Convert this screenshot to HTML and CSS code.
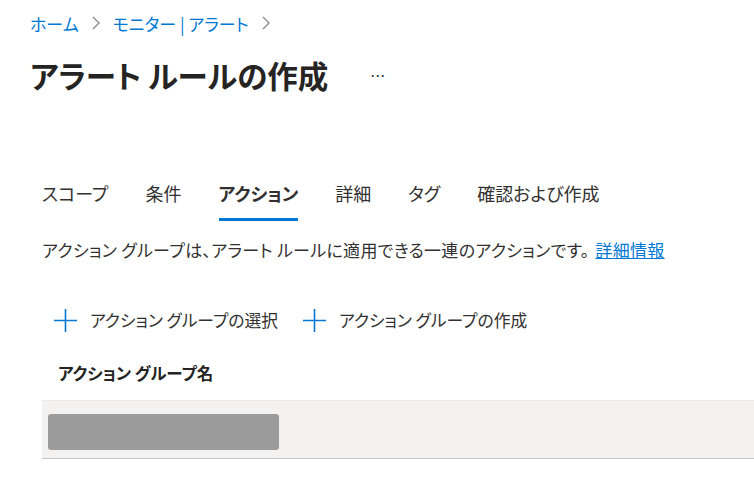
FILE: index.html
```html
<!DOCTYPE html>
<html lang="ja">
<head>
  <meta charset="UTF-8">
  <meta name="viewport" content="width=device-width, initial-scale=1.0">
  <title>アラート ルールの作成</title>
  <link rel="stylesheet" href="styles.css">
</head>
<body>
  <nav class="breadcrumb">
    <a href="#">ホーム</a>
    <svg class="chevron" width="8" height="14" viewBox="0 0 8 14"><path d="M1 1l6 6-6 6" stroke="#8a8886" stroke-width="1.3" fill="none"/></svg>
    <a href="#">モニター | アラート</a>
    <svg class="chevron" width="8" height="14" viewBox="0 0 8 14"><path d="M1 1l6 6-6 6" stroke="#8a8886" stroke-width="1.3" fill="none"/></svg>
  </nav>

  <div class="page-title">
    <h1>アラート ルールの作成</h1>
    <span class="more">…</span>
  </div>

  <div class="content">
    <ul class="tabs">
      <li>スコープ</li>
      <li>条件</li>
      <li class="active">アクション</li>
      <li>詳細</li>
      <li>タグ</li>
      <li>確認および作成</li>
    </ul>

    <p class="desc">アクション グループは、アラート ルールに適用できる一連のアクションです。<a href="#">詳細情報</a></p>

    <div class="commands">
      <button class="cmd">
        <svg width="23" height="23" viewBox="0 0 23 23"><path d="M11.5 0v23M0 11.5h23" stroke="#0078d4" stroke-width="1.6" fill="none"/></svg>
        アクション グループの選択
      </button>
      <button class="cmd">
        <svg width="23" height="23" viewBox="0 0 23 23"><path d="M11.5 0v23M0 11.5h23" stroke="#0078d4" stroke-width="1.6" fill="none"/></svg>
        アクション グループの作成
      </button>
    </div>

    <div class="grid-head">アクション グループ名</div>
    <div class="grid-row">
      <div class="placeholder"></div>
    </div>
  </div>
</body>
</html>
```

FILE: styles.css
```css
body {
  margin: 0;
  padding: 0 0 0 30px;
  font-family: "Noto Sans CJK JP", "Noto Sans", sans-serif;
  font-feature-settings: "palt";
  color: #323130;
  background: #fff;
  overflow: hidden;
}
a {
  color: #0078d4;
  text-decoration: none;
}
.breadcrumb {
  display: flex;
  align-items: center;
  gap: 13px;
  height: 22px;
  margin-top: 12px;
  font-size: 17px;
}
.page-title {
  display: flex;
  align-items: center;
  margin-top: 20px;
  height: 42px;
}
.page-title h1 {
  margin: 0;
  font-size: 30.5px;
  font-weight: 700;
  color: #252423;
}
.more {
  margin-left: 42px;
  font-size: 15px;
  color: #323130;
}
.content {
  padding-left: 12px;
}
.tabs {
  display: flex;
  gap: 37px;
  list-style: none;
  margin: 80px 0 0;
  padding: 0;
  font-size: 18px;
}
.tabs li {
  padding: 4px 0 12px;
  border-bottom: 3px solid transparent;
}
.tabs li.active {
  font-weight: 700;
  border-bottom-color: #0078d4;
}
.desc {
  margin: 16px 0 0;
  font-size: 17px;
  letter-spacing: 0.3px;
}
.desc a {
  margin-left: 6px;
  text-decoration: underline;
}
.commands {
  display: flex;
  gap: 25px;
  margin-top: 46px;
  padding-left: 12px;
}
.cmd {
  display: flex;
  align-items: center;
  gap: 13px;
  background: none;
  border: none;
  padding: 0;
  font: inherit;
  font-size: 16.8px;
  color: #323130;
}
.grid-head {
  margin-top: 29px;
  padding-left: 16px;
  font-size: 16.5px;
  font-weight: 700;
  color: #252423;
}
.grid-row {
  margin-top: 15px;
  height: 44px;
  padding: 13px 0 0 6px;
  background: #f3f2f1;
  border-top: 1px solid #edebe9;
  border-bottom: 1px solid #c8c6c4;
}
.placeholder {
  width: 231px;
  height: 36px;
  background: #9b9b9b;
  border-radius: 3px;
}
```
